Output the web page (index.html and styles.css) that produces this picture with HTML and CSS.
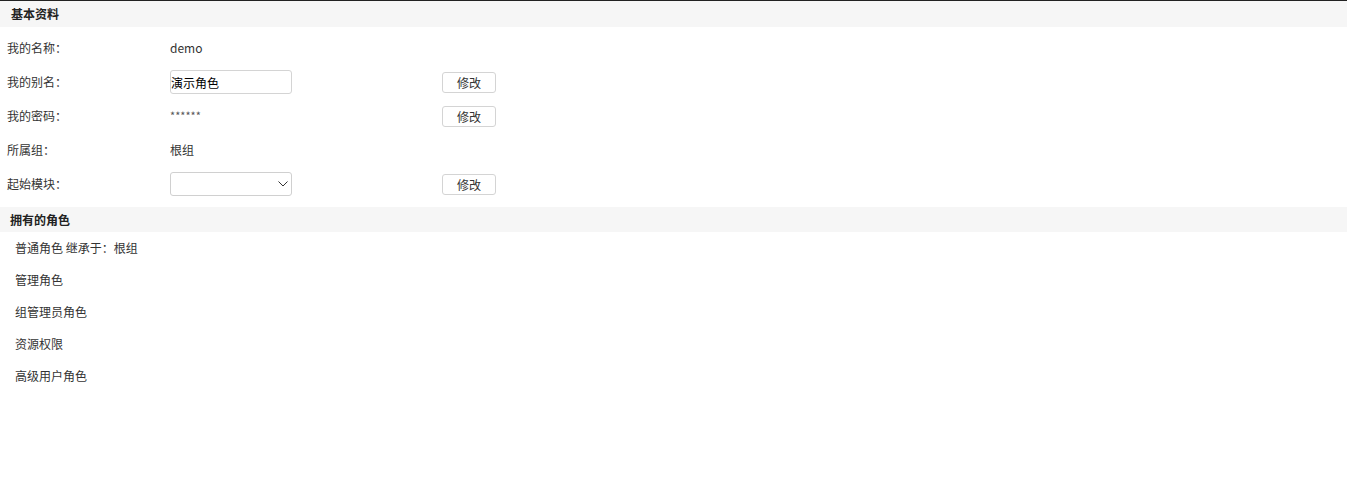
FILE: index.html
```html
<!DOCTYPE html>
<html lang="zh-CN">
<head>
    <meta charset="UTF-8">
    <meta name="viewport" content="width=device-width, initial-scale=1.0">
    <title>个人资料</title>
    <link rel="stylesheet" href="styles.css">
</head>
<body>
    <div class="page">
        <div class="section-title">基本资料</div>
        <div class="info-table">
            <div class="info-row">
                <span class="label">我的名称：</span>
                <span class="value">demo</span>
                <span></span>
            </div>
            <div class="info-row">
                <span class="label">我的别名：</span>
                <span class="value"><input type="text" class="text-input" value="演示角色"></span>
                <span><button class="btn">修改</button></span>
            </div>
            <div class="info-row">
                <span class="label">我的密码：</span>
                <span class="value pwd">******</span>
                <span><button class="btn">修改</button></span>
            </div>
            <div class="info-row">
                <span class="label">所属组：</span>
                <span class="value">根组</span>
                <span></span>
            </div>
            <div class="info-row">
                <span class="label">起始模块：</span>
                <span class="value">
                    <span class="select-box">
                        <select class="select-input"><option></option></select>
                        <svg class="select-arrow" width="10" height="6" viewBox="0 0 10 6"><path d="M0.5 0.5 L5 5 L9.5 0.5" fill="none" stroke="#333" stroke-width="1"/></svg>
                    </span>
                </span>
                <span><button class="btn">修改</button></span>
            </div>
        </div>

        <div class="section-title second">拥有的角色</div>
        <ul class="role-list">
            <li>普通角色 继承于：根组</li>
            <li>管理角色</li>
            <li>组管理员角色</li>
            <li>资源权限</li>
            <li>高级用户角色</li>
        </ul>
    </div>
</body>
</html>
```

FILE: styles.css
```css
* {
    margin: 0;
    padding: 0;
    box-sizing: border-box;
}

body {
    font-family: "Microsoft YaHei", "Noto Sans CJK SC", sans-serif;
    font-size: 12px;
    color: #333;
    background-color: #fff;
}

.page {
    border-top: 1px solid #222;
}

.section-title {
    height: 26px;
    line-height: 26px;
    padding-left: 11px;
    background-color: #f6f6f6;
    font-weight: bold;
    color: #222;
}

.section-title.second {
    height: 25px;
    line-height: 25px;
    padding-left: 10px;
    margin-top: 7px;
}

.info-table {
    margin-top: 3px;
}

.info-row {
    display: grid;
    grid-template-columns: 170px 272px 1fr;
    align-items: center;
    height: 34px;
}

.label {
    padding-left: 7px;
}

.pwd {
    font-size: 11px;
    color: #555;
}

.text-input {
    width: 122px;
    height: 24px;
    margin-top: 2px;
    padding: 0;
    border: 1px solid #d4d4d4;
    border-radius: 3px;
    font-family: inherit;
    font-size: 12px;
    color: #000;
    outline: none;
}

.select-box {
    position: relative;
    display: inline-block;
    width: 122px;
    height: 24px;
    margin-top: 1px;
}

.select-input {
    appearance: none;
    -webkit-appearance: none;
    width: 100%;
    height: 100%;
    border: 1px solid #d0d0d0;
    border-radius: 3px;
    background-color: #fff;
    font-family: inherit;
    font-size: 12px;
}

.select-arrow {
    position: absolute;
    right: 4px;
    top: 9px;
    pointer-events: none;
}

.btn {
    width: 54px;
    height: 21px;
    margin-top: 2px;
    border: 1px solid #d4d4d4;
    border-radius: 3px;
    background-color: #fff;
    font-family: inherit;
    font-size: 12px;
    color: #333;
    cursor: pointer;
}

.role-list {
    list-style: none;
}

.role-list li {
    height: 32px;
    line-height: 32px;
    padding-left: 15px;
}
```
